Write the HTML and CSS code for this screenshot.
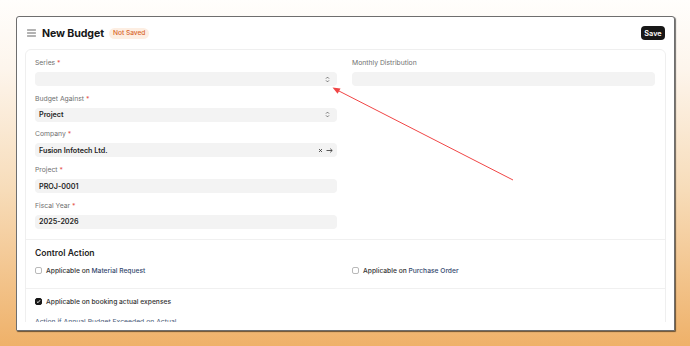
FILE: index.html
```html
<!DOCTYPE html>
<html>
<head>
<meta charset="utf-8">
<link rel="stylesheet" href="styles.css">
</head>
<body>
<div class="stage">
  <div class="window">
    <div class="header">
      <div class="title-group">
        <svg class="hamburger" width="9" height="8" viewBox="0 0 9 8"><path d="M0.5 1H8.5M0.5 4H8.5M0.5 7H8.5" stroke="#555" stroke-width="0.9" stroke-linecap="round"/></svg>
        <span class="title">New Budget</span>
        <span class="pill">Not Saved</span>
      </div>
      <button class="save">Save</button>
    </div>
    <div class="body">
      <div class="card">
        <div class="section section-main grid2">
          <div class="col">
            <div class="field">
              <div class="label">Series <span class="req">*</span></div>
              <div class="input select"><span></span>
                <svg class="updown" width="5" height="7" viewBox="0 0 5 7"><path d="M1 2.6L2.5 1.1L4 2.6M1 4.4L2.5 5.9L4 4.4" fill="none" stroke="#444" stroke-width="0.7"/></svg>
              </div>
            </div>
            <div class="field">
              <div class="label">Budget Against <span class="req">*</span></div>
              <div class="input select"><span>Project</span>
                <svg class="updown" width="5" height="7" viewBox="0 0 5 7"><path d="M1 2.6L2.5 1.1L4 2.6M1 4.4L2.5 5.9L4 4.4" fill="none" stroke="#444" stroke-width="0.7"/></svg>
              </div>
            </div>
            <div class="field">
              <div class="label">Company <span class="req">*</span></div>
              <div class="input select"><span>Fusion Infotech Ltd.</span>
                <span class="actions">
                  <svg width="5" height="5" viewBox="0 0 5 5"><path d="M1 1L4 4M4 1L1 4" stroke="#333" stroke-width="0.8"/></svg>
                  <svg width="7" height="5" viewBox="0 0 7 5"><path d="M0.5 2.5H6.2M4.2 0.6L6.2 2.5L4.2 4.4" fill="none" stroke="#333" stroke-width="0.8"/></svg>
                </span>
              </div>
            </div>
            <div class="field">
              <div class="label">Project <span class="req">*</span></div>
              <div class="input"><span>PROJ-0001</span></div>
            </div>
            <div class="field last">
              <div class="label">Fiscal Year <span class="req">*</span></div>
              <div class="input"><span>2025-2026</span></div>
            </div>
          </div>
          <div class="col">
            <div class="field">
              <div class="label">Monthly Distribution</div>
              <div class="input"></div>
            </div>
          </div>
        </div>
        <div class="section section-control">
          <div class="section-title">Control Action</div>
          <div class="grid2 checks">
            <label class="check"><span class="box"></span>Applicable on <span class="link">Material Request</span></label>
            <label class="check"><span class="box"></span>Applicable on <span class="link">Purchase Order</span></label>
          </div>
        </div>
        <div class="section">
          <label class="check"><span class="box checked"><svg width="5" height="5" viewBox="0 0 5 5"><path d="M0.9 2.6L2 3.7L4.1 1.2" fill="none" stroke="#fff" stroke-width="0.9"/></svg></span>Applicable on booking actual expenses</label>
          <div class="sub">Action if Annual Budget Exceeded on Actual</div>
        </div>
      </div>
    </div>
  </div>
  <svg class="arrow" width="690" height="346" viewBox="0 0 690 346">
    <line x1="513" y1="180" x2="337" y2="90" stroke="#f04545" stroke-width="1"/>
    <path d="M332.5 87.5L340.5 88.6L337.6 93.8Z" fill="#f04545"/>
  </svg>
</div>
</body>
</html>
```
FILE: styles.css
```css
* { box-sizing: border-box; }
html, body { margin: 0; padding: 0; }
body {
  width: 690px;
  height: 346px;
  overflow: hidden;
  font-family: Inter, "Noto Sans", "Liberation Sans", sans-serif;
  background: linear-gradient(180deg, #fffefc 0%, #fdf5ec 20%, #f7dcb9 55%, #efb169 100%);
}
.stage {
  position: relative;
  width: 690px;
  height: 346px;
  padding: 16px 16px 0 16px;
}
.window {
  width: 659px;
  height: 315px;
  background: #fff;
  border: 1px solid #6e6e6e;
  border-radius: 3px 3px 1px 1px;
  box-shadow: 1px 1px 1px rgba(0,0,0,0.55);
  padding: 0 8px 8px 8px;
  display: flex;
  flex-direction: column;
}
.header {
  height: 32px;
  display: flex;
  align-items: center;
  justify-content: space-between;
  padding: 0 1px 0 1px;
  flex: none;
}
.title-group { display: flex; align-items: center; }
.hamburger { margin-left: 1px; margin-right: 6px; }
.title {
  font-size: 10.6px;
  font-weight: 700;
  color: #171717;
  letter-spacing: -0.1px;
}
.pill {
  margin-left: 5px;
  background: #fdeee2;
  color: #d8662c;
  font-size: 6.6px;
  font-weight: 500;
  padding: 2px 4px;
  border-radius: 6px;
  line-height: 7px;
}
.save {
  background: #171717;
  color: #fff;
  border: none;
  border-radius: 4px;
  font-family: inherit;
  font-size: 7.3px;
  font-weight: 600;
  height: 14px;
  width: 24px;
  padding: 0;
}
.body {
  flex: 1;
  overflow: hidden;
}
.card {
  border: 1px solid #efefef;
  border-radius: 6px;
}
.section {
  padding: 9px 9px 9px 9px;
  border-bottom: 1px solid #f0f0f0;
}
.section-main { padding-bottom: 10px; }
.section-control { padding-top: 8px; padding-bottom: 13px; }
.section:last-child { border-bottom: none; }
.grid2 {
  display: grid;
  grid-template-columns: 302px 303px;
  column-gap: 15px;
}
.field { margin-bottom: 8.7px; }
.field.last { margin-bottom: 0; }
.label {
  font-size: 6.8px;
  line-height: 8px;
  color: #707070;
  margin-bottom: 5px;
}
.req { color: #e5534b; }
.input {
  height: 14px;
  background: #f3f3f3;
  border-radius: 4px;
  display: flex;
  align-items: center;
  justify-content: space-between;
  padding: 0 4px 0 4px;
  font-size: 7.2px;
  font-weight: 600;
  color: #1f1f1f;
}
.updown { margin-right: 3px; }
.actions { display: flex; align-items: center; gap: 3px; }
.section-title {
  font-size: 8.6px;
  font-weight: 600;
  color: #1f1f1f;
  line-height: 10px;
  margin-bottom: 9px;
}
.check {
  display: flex;
  align-items: center;
  font-size: 6.7px;
  font-weight: 500;
  color: #333;
  line-height: 8px;
  white-space: pre;
}
.box {
  width: 7px;
  height: 7px;
  border: 0.8px solid #b9b9b9;
  border-radius: 2px;
  margin-right: 4px;
  display: inline-flex;
  align-items: center;
  justify-content: center;
  background: #fff;
}
.box.checked { background: #171717; border-color: #171717; }
.link { color: #34496e; }
.sub {
  margin-top: 12px;
  font-size: 6.8px;
  line-height: 8px;
  color: #4a5a78;
}
.arrow {
  position: absolute;
  left: 0;
  top: 0;
  pointer-events: none;
}
```
